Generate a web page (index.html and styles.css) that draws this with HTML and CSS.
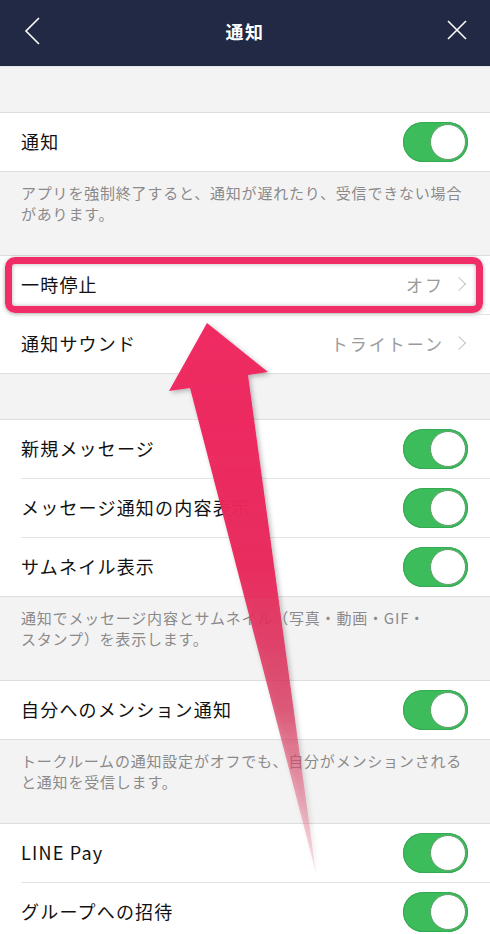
FILE: index.html
```
<!DOCTYPE html>
<html lang="ja">
<head>
    <meta charset="UTF-8">
    <meta name="viewport" content="width=device-width, initial-scale=1.0">
    <title>通知</title>
    <link rel="stylesheet" href="styles.css">
</head>
<body>
    <div class="page">
        <div class="header">
            <svg class="nav-icon" width="24" height="30" viewBox="0 0 24 30">
                <path d="M18 2 L5 15 L18 28" fill="none" stroke="#fff" stroke-width="1.6"/>
            </svg>
            <h1>通知</h1>
            <svg class="nav-icon" width="24" height="30" viewBox="0 0 24 30">
                <path d="M3 5 L21 23 M21 5 L3 23" fill="none" stroke="#fff" stroke-width="1.6"/>
            </svg>
        </div>

        <div class="gap"></div>

        <div class="group">
            <div class="row">
                <span class="label">通知</span>
                <span class="toggle"></span>
            </div>
        </div>
        <p class="note">アプリを強制終了すると、通知が遅れたり、受信できない場合<br>があります。</p>

        <div class="group">
            <div class="row highlighted">
                <span class="label">一時停止</span>
                <span class="value">オフ<i class="chevron"></i></span>
                <div class="highlight-box"></div>
            </div>
            <div class="row">
                <span class="label">通知サウンド</span>
                <span class="value">トライトーン<i class="chevron"></i></span>
            </div>
        </div>

        <div class="gap"></div>

        <div class="group">
            <div class="row">
                <span class="label">新規メッセージ</span>
                <span class="toggle"></span>
            </div>
            <div class="row">
                <span class="label">メッセージ通知の内容表示</span>
                <span class="toggle"></span>
            </div>
            <div class="row">
                <span class="label">サムネイル表示</span>
                <span class="toggle"></span>
            </div>
        </div>
        <p class="note">通知でメッセージ内容とサムネイル（写真・動画・GIF・<br>スタンプ）を表示します。</p>

        <div class="group">
            <div class="row">
                <span class="label">自分へのメンション通知</span>
                <span class="toggle"></span>
            </div>
        </div>
        <p class="note">トークルームの通知設定がオフでも、自分がメンションされる<br>と通知を受信します。</p>

        <div class="group">
            <div class="row">
                <span class="label">LINE Pay</span>
                <span class="toggle"></span>
            </div>
            <div class="row">
                <span class="label">グループへの招待</span>
                <span class="toggle"></span>
            </div>
        </div>

        <svg class="arrow" width="490" height="934" viewBox="0 0 490 934">
            <defs>
                <linearGradient id="arrowFill" x1="0" y1="323" x2="0" y2="873" gradientUnits="userSpaceOnUse">
                    <stop offset="0" stop-color="#f02a62"/>
                    <stop offset="0.45" stop-color="#e8275a" stop-opacity="0.96"/>
                    <stop offset="0.7" stop-color="#d9375e" stop-opacity="0.78"/>
                    <stop offset="1" stop-color="#e8738c" stop-opacity="0.2"/>
                </linearGradient>
                <filter id="arrowShadow" x="-20%" y="-5%" width="140%" height="110%">
                    <feDropShadow dx="2" dy="2" stdDeviation="2.5" flood-color="#000" flood-opacity="0.28"/>
                </filter>
            </defs>
            <path d="M207 323 L268 372 L248 375 L316 873 L190 388 L169 391 Z" fill="url(#arrowFill)" filter="url(#arrowShadow)"/>
        </svg>
    </div>
</body>
</html>
```

FILE: styles.css
```
body {
    margin: 0;
    background-color: #f4f3f4;
    font-family: "Noto Sans CJK JP", "Noto Sans", sans-serif;
    color: #111;
}
.page {
    position: relative;
    width: 490px;
    overflow: hidden;
}
.header {
    height: 67px;
    background-color: #222944;
    display: flex;
    align-items: center;
    justify-content: space-between;
    padding: 0 21px 5px 21px;
    box-sizing: border-box;
    border-bottom: 1px solid #e6e6ea;
}
.header h1 {
    margin: 0;
    color: #fff;
    font-size: 18px;
    font-weight: bold;
    letter-spacing: 1.5px;
}
.nav-icon {
    display: block;
}
.gap {
    height: 45px;
}
.group {
    background-color: #fff;
    border-top: 1px solid #dedede;
    border-bottom: 1px solid #dedede;
}
.row {
    position: relative;
    height: 58px;
    display: flex;
    align-items: center;
    justify-content: space-between;
    padding: 0 22px 2px 21px;
    box-sizing: border-box;
}
.row + .row::before {
    content: "";
    position: absolute;
    top: -1px;
    left: 21px;
    right: 0;
    height: 1px;
    background-color: #e3e3e3;
}
.row + .row {
    margin-top: 1px;
}
.label {
    font-size: 18px;
    letter-spacing: 1.2px;
}
.value {
    display: flex;
    align-items: center;
    font-size: 17px;
    color: #9a9a9a;
    letter-spacing: 2px;
}
.chevron {
    display: inline-block;
    width: 9px;
    height: 9px;
    margin-left: 10px;
    margin-right: 4px;
    border-top: 1.5px solid #c4c4c8;
    border-right: 1.5px solid #c4c4c8;
    transform: rotate(45deg);
}
.toggle {
    position: relative;
    width: 65px;
    height: 40px;
    margin-top: 2px;
    border-radius: 20px;
    background-color: #3cbc5a;
    box-shadow: inset 0 0 0 1px #36a954;
}
.toggle::after {
    content: "";
    position: absolute;
    top: 2px;
    right: 2px;
    width: 34px;
    height: 34px;
    border-radius: 50%;
    background-color: #fff;
    border: 1px solid #5e9d6c;
}
.note {
    margin: 0;
    padding: 10px 10px 31px 21px;
    font-size: 15px;
    line-height: 21px;
    color: #8a8a8a;
    letter-spacing: 0.8px;
    white-space: nowrap;
}
.highlight-box {
    position: absolute;
    top: 1px;
    bottom: 1px;
    left: 5px;
    right: 7px;
    border: 7px solid #f02d66;
    border-radius: 10px;
    box-shadow: 0 1px 4px rgba(0, 0, 0, 0.35), inset 0 0 4px rgba(0, 0, 0, 0.3);
}
.arrow {
    position: absolute;
    top: 0;
    left: 0;
    pointer-events: none;
}
```
